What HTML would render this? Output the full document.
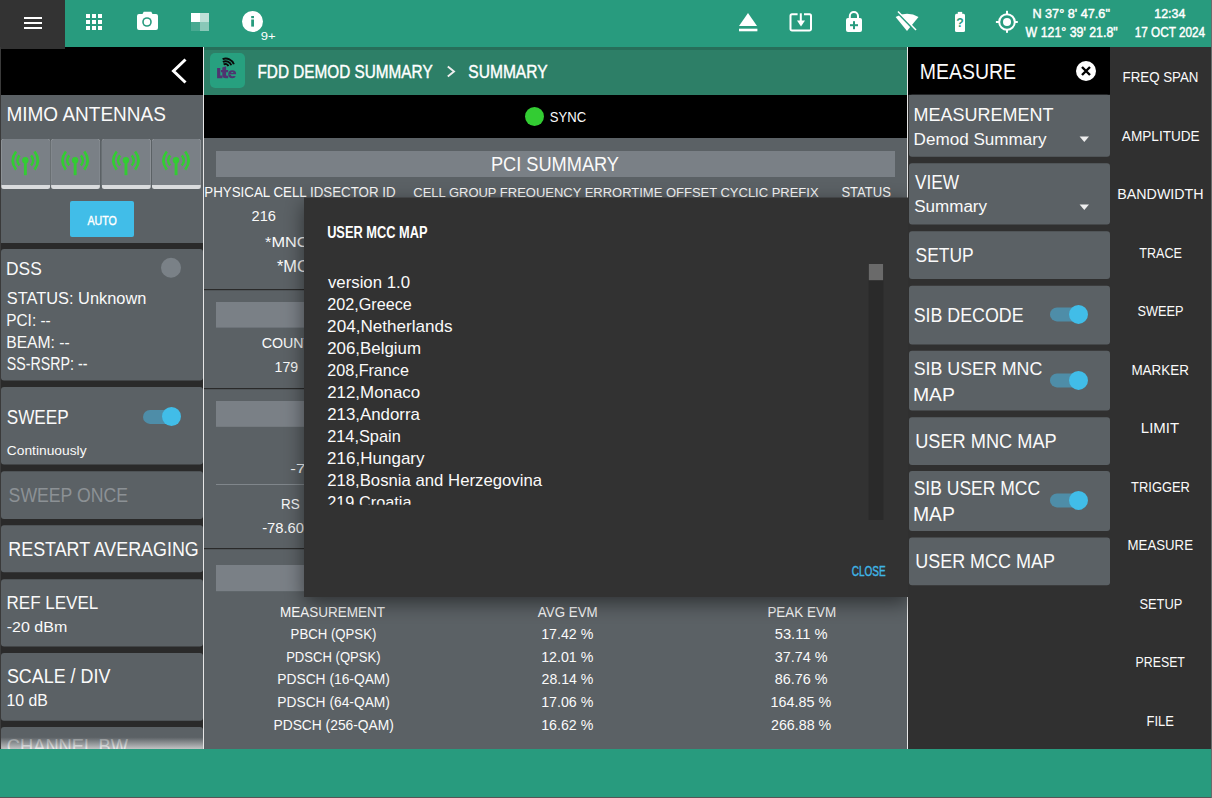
<!DOCTYPE html>
<html><head><meta charset="utf-8"><title>FDD Demod Summary</title>
<style>html,body{margin:0;padding:0;background:#2c2c2c;overflow:hidden}svg{display:block}text{font-family:"Liberation Sans",sans-serif}</style>
</head><body>
<svg width="1212" height="798" viewBox="0 0 1212 798">
<rect x="0" y="0" width="1212" height="798" fill="#2a2a2a" />
<rect x="0" y="0" width="1212" height="47" fill="#289b7e" />
<rect x="0" y="0" width="65" height="49" fill="#333333" />
<rect x="24" y="17" width="18" height="2" fill="#ffffff" />
<rect x="24" y="22" width="18" height="2" fill="#ffffff" />
<rect x="24" y="27" width="18" height="2" fill="#ffffff" />
<rect x="86" y="14" width="4" height="4" fill="#ffffff" />
<rect x="86" y="20" width="4" height="4" fill="#ffffff" />
<rect x="86" y="26" width="4" height="4" fill="#ffffff" />
<rect x="92" y="14" width="4" height="4" fill="#ffffff" />
<rect x="92" y="20" width="4" height="4" fill="#ffffff" />
<rect x="92" y="26" width="4" height="4" fill="#ffffff" />
<rect x="98" y="14" width="4" height="4" fill="#ffffff" />
<rect x="98" y="20" width="4" height="4" fill="#ffffff" />
<rect x="98" y="26" width="4" height="4" fill="#ffffff" />
<path d="M137 16 a2 2 0 0 1 2-2 h3.5 l1.2-2.2 h7.6 l1.2 2.2 h3.5 a2 2 0 0 1 2 2 v12 a2 2 0 0 1-2 2 h-17 a2 2 0 0 1-2-2z" fill="#fff"/>
<circle cx="147" cy="22" r="4.8" fill="#289b7e" />
<circle cx="147" cy="22" r="3.2" fill="#fff" />
<rect x="191" y="13" width="9" height="9" fill="#ffffff" />
<rect x="200" y="13" width="9" height="9" fill="#ffffff" fill-opacity="0.7"/>
<rect x="191" y="22" width="9" height="9" fill="#ffffff" fill-opacity="0.15"/>
<rect x="200" y="22" width="9" height="9" fill="#ffffff" fill-opacity="0.45"/>
<circle cx="252.5" cy="21.5" r="10.5" fill="#ffffff" />
<rect x="251.2" y="16" width="2.8" height="2.2" fill="#289b7e" />
<rect x="251.2" y="19.5" width="2.8" height="7.1" fill="#289b7e" />
<text x="260.79" y="39.50" font-size="11.63" textLength="14.85" lengthAdjust="spacingAndGlyphs" fill="#ffffff" >9+</text>
<path d="M748 13 L757 26 H739 Z" fill="#fff"/>
<rect x="739" y="28.7" width="18.4" height="2.6" fill="#fff" />
<path d="M797.6 14.3 H792 a1.5 1.5 0 0 0-1.5 1.5 V29.1 a1.5 1.5 0 0 0 1.5 1.5 H809.5 a1.5 1.5 0 0 0 1.5-1.5 V15.8 a1.5 1.5 0 0 0-1.5-1.5 H804" fill="none" stroke="#fff" stroke-width="2"/>
<rect x="799.8" y="13.3" width="2" height="9" fill="#fff" />
<path d="M797 20.6 H805 L801 26.4 Z" fill="#fff"/>
<path d="M849.8 18.5 V16 a4.1 4.1 0 0 1 8.2 0 V18.5" fill="none" stroke="#fff" stroke-width="2"/>
<rect x="846" y="17.9" width="16" height="14.2" fill="#fff" rx="2" />
<rect x="850" y="24.2" width="8" height="2" fill="#289b7e" />
<rect x="853" y="21.2" width="2" height="8" fill="#289b7e" />
<path d="M895.6 17 A 22 22 0 0 1 918.5 17 L907 31 Z" fill="#fff"/>
<path d="M897 12 L915.5 31" stroke="#289b7e" stroke-width="2.2"/>
<path d="M898 11.5 L916 30" stroke="#fff" stroke-width="1.5"/>
<rect x="957.8" y="11.9" width="4.4" height="2.5" fill="#fff" />
<rect x="955" y="13.7" width="10" height="18.2" fill="#fff" rx="1.5" />
<text x="956.24" y="27.00" font-size="12.35" textLength="7.47" lengthAdjust="spacingAndGlyphs" font-weight="bold" fill="#289b7e" >?</text>
<circle cx="1007" cy="22" r="7.8" fill="none" stroke="#fff" stroke-width="2"/>
<circle cx="1007" cy="22" r="4" fill="#fff" />
<rect x="1006" y="10.8" width="2" height="3.5" fill="#fff" />
<rect x="1006" y="29.5" width="2" height="3.3" fill="#fff" />
<rect x="995.9" y="21" width="3.5" height="2" fill="#fff" />
<rect x="1014.5" y="21" width="3.3" height="2" fill="#fff" />
<text x="1032.39" y="17.97" font-size="13.30" textLength="77.53" lengthAdjust="spacingAndGlyphs" fill="#ffffff"  stroke="#ffffff" stroke-width="0.45">N 37° 8&#x27; 47.6&quot;</text>
<text x="1025.57" y="36.52" font-size="13.81" textLength="92.13" lengthAdjust="spacingAndGlyphs" fill="#ffffff"  stroke="#ffffff" stroke-width="0.45">W 121° 39&#x27; 21.8&quot;</text>
<text x="1154.28" y="17.97" font-size="13.30" textLength="31.06" lengthAdjust="spacingAndGlyphs" fill="#ffffff"  stroke="#ffffff" stroke-width="0.45">12:34</text>
<text x="1134.73" y="36.52" font-size="13.81" textLength="70.39" lengthAdjust="spacingAndGlyphs" fill="#ffffff"  stroke="#ffffff" stroke-width="0.45">17 OCT 2024</text>
<rect x="0" y="47" width="203" height="48" fill="#000" />
<path d="M185.5 59.5 L173.5 71 L185.5 82.5" fill="none" stroke="#fff" stroke-width="3"/>
<rect x="0" y="47" width="65" height="2" fill="#333333" />
<rect x="1" y="95" width="202" height="148" fill="#5b6165" />
<text x="6.45" y="121.00" font-size="20.35" textLength="159.41" lengthAdjust="spacingAndGlyphs" fill="#fafafa" >MIMO ANTENNAS</text>
<rect x="1.3" y="139" width="48.8" height="50" fill="#dadcde" rx="2.5" />
<rect x="1.3" y="139" width="48.8" height="46" fill="#7a8086" rx="2.5" />
<rect x="1.3" y="183" width="48.8" height="2" fill="#7a8086" />
<g fill="none" stroke="#33cc33" stroke-width="2.6" stroke-linecap="butt"><path d="M19.5 155.3 Q15.3 160.4 19.5 165.5"/><path d="M31.1 155.3 Q35.3 160.4 31.1 165.5"/><path d="M16.1 151.5 Q9.3 160.5 16.1 169.6"/><path d="M34.5 151.5 Q41.3 160.5 34.5 169.6"/></g>
<circle cx="25.3" cy="160.2" r="3.2" fill="#33cc33" />
<rect x="23.900000000000002" y="160" width="2.9" height="15.2" fill="#33cc33" />
<rect x="51.1" y="139" width="48.8" height="50" fill="#dadcde" rx="2.5" />
<rect x="51.1" y="139" width="48.8" height="46" fill="#7a8086" rx="2.5" />
<rect x="51.1" y="183" width="48.8" height="2" fill="#7a8086" />
<g fill="none" stroke="#33cc33" stroke-width="2.6" stroke-linecap="butt"><path d="M69.3 155.3 Q65.1 160.4 69.3 165.5"/><path d="M80.89999999999999 155.3 Q85.1 160.4 80.89999999999999 165.5"/><path d="M65.89999999999999 151.5 Q59.099999999999994 160.5 65.89999999999999 169.6"/><path d="M84.3 151.5 Q91.1 160.5 84.3 169.6"/></g>
<circle cx="75.1" cy="160.2" r="3.2" fill="#33cc33" />
<rect x="73.69999999999999" y="160" width="2.9" height="15.2" fill="#33cc33" />
<rect x="101.9" y="139" width="48.8" height="50" fill="#dadcde" rx="2.5" />
<rect x="101.9" y="139" width="48.8" height="46" fill="#7a8086" rx="2.5" />
<rect x="101.9" y="183" width="48.8" height="2" fill="#7a8086" />
<g fill="none" stroke="#33cc33" stroke-width="2.6" stroke-linecap="butt"><path d="M120.10000000000001 155.3 Q115.9 160.4 120.10000000000001 165.5"/><path d="M131.70000000000002 155.3 Q135.9 160.4 131.70000000000002 165.5"/><path d="M116.7 151.5 Q109.9 160.5 116.7 169.6"/><path d="M135.1 151.5 Q141.9 160.5 135.1 169.6"/></g>
<circle cx="125.9" cy="160.2" r="3.2" fill="#33cc33" />
<rect x="124.5" y="160" width="2.9" height="15.2" fill="#33cc33" />
<rect x="152" y="139" width="48.8" height="50" fill="#dadcde" rx="2.5" />
<rect x="152" y="139" width="48.8" height="46" fill="#7a8086" rx="2.5" />
<rect x="152" y="183" width="48.8" height="2" fill="#7a8086" />
<g fill="none" stroke="#33cc33" stroke-width="2.6" stroke-linecap="butt"><path d="M170.2 155.3 Q166 160.4 170.2 165.5"/><path d="M181.8 155.3 Q186 160.4 181.8 165.5"/><path d="M166.8 151.5 Q160 160.5 166.8 169.6"/><path d="M185.2 151.5 Q192 160.5 185.2 169.6"/></g>
<circle cx="176" cy="160.2" r="3.2" fill="#33cc33" />
<rect x="174.6" y="160" width="2.9" height="15.2" fill="#33cc33" />
<rect x="70" y="201" width="64" height="36" fill="#41bde8" rx="2" />
<text x="87.40" y="224.58" font-size="13.59" textLength="29.38" lengthAdjust="spacingAndGlyphs" fill="#ffffff"  stroke="#ffffff" stroke-width="0.45">AUTO</text>
<rect x="1" y="249" width="202" height="131.6" fill="#5b6165" rx="3" />
<text x="6.07" y="274.80" font-size="19.19" textLength="35.72" lengthAdjust="spacingAndGlyphs" fill="#fafafa" >DSS</text>
<circle cx="171" cy="267.7" r="10" fill="#7a8187" />
<text x="6.77" y="303.90" font-size="16.42" textLength="139.58" lengthAdjust="spacingAndGlyphs" fill="#fafafa" >STATUS: Unknown</text>
<text x="6.24" y="325.90" font-size="16.42" textLength="44.45" lengthAdjust="spacingAndGlyphs" fill="#fafafa" >PCI: --</text>
<text x="6.22" y="347.50" font-size="16.86" textLength="63.48" lengthAdjust="spacingAndGlyphs" fill="#fafafa" >BEAM: --</text>
<text x="6.85" y="369.70" font-size="17.73" textLength="80.58" lengthAdjust="spacingAndGlyphs" fill="#fafafa" >SS-RSRP: --</text>
<rect x="1" y="387.1" width="202" height="77.5" fill="#5b6165" rx="3" />
<text x="6.72" y="424.20" font-size="19.77" textLength="61.88" lengthAdjust="spacingAndGlyphs" fill="#fafafa" >SWEEP</text>
<rect x="143" y="409.9" width="30" height="14" fill="#4e8da8" rx="7" />
<circle cx="171.5" cy="416.5" r="9.5" fill="#41bde8" />
<text x="6.80" y="455.20" font-size="13.66" textLength="79.73" lengthAdjust="spacingAndGlyphs" fill="#fafafa" >Continuously</text>
<rect x="1" y="471.2" width="202" height="47.9" fill="#5b6165" rx="3" />
<text x="8.60" y="502.20" font-size="19.77" textLength="119.46" lengthAdjust="spacingAndGlyphs" fill="#8c9195" >SWEEP ONCE</text>
<rect x="1" y="525.3" width="202" height="47" fill="#5b6165" rx="3" />
<text x="8.37" y="556.00" font-size="19.48" textLength="190.34" lengthAdjust="spacingAndGlyphs" fill="#fafafa" >RESTART AVERAGING</text>
<rect x="1" y="579.3" width="202" height="67.3" fill="#5b6165" rx="3" />
<text x="6.50" y="608.60" font-size="19.04" textLength="91.76" lengthAdjust="spacingAndGlyphs" fill="#fafafa" >REF LEVEL</text>
<text x="6.79" y="631.90" font-size="15.55" textLength="60.47" lengthAdjust="spacingAndGlyphs" fill="#fafafa" >-20 dBm</text>
<rect x="1" y="653" width="202" height="67.8" fill="#5b6165" rx="3" />
<text x="6.89" y="682.80" font-size="19.33" textLength="103.49" lengthAdjust="spacingAndGlyphs" fill="#fafafa" >SCALE / DIV</text>
<text x="6.50" y="706.00" font-size="15.70" textLength="41.34" lengthAdjust="spacingAndGlyphs" fill="#fafafa" >10 dB</text>
<defs><linearGradient id="fade" x1="0" y1="0" x2="0" y2="1"><stop offset="0" stop-color="#5b6165"/><stop offset="0.35" stop-color="#5b6165"/><stop offset="1" stop-color="#e8e8e8"/></linearGradient></defs>
<rect x="1" y="727.1" width="202" height="22" fill="#5b6165" rx="3" />
<text x="6.78" y="752.50" font-size="19.62" textLength="121.29" lengthAdjust="spacingAndGlyphs" fill="#fafafa" >CHANNEL BW</text>
<rect x="1" y="731" width="202" height="18" fill="url(#fade)" fill-opacity="0.72"/>
<rect x="0" y="47" width="1" height="702" fill="#3a3a3a" />
<rect x="203" y="47" width="1" height="702" fill="#e6e6e6" />
<rect x="204" y="47" width="703" height="48" fill="#2d7f67" />
<rect x="204" y="47" width="703" height="3" fill="#000" fill-opacity="0.12"/>
<rect x="210" y="53" width="35" height="35" fill="#27a07f" rx="5" />
<g fill="#4f3470"><path d="M217.1 68 H220.3 V75.6 H222.4 V78.2 H217.1 Z"/><path d="M222.3 67.6 L226.1 66.3 V70 H228.2 V72.2 H226.1 V75 Q226.1 75.8 227 75.8 H228.2 V78.2 H225.8 Q222.3 78.2 222.3 75.5 V72.2 H221 V70 H222.3 Z"/></g>
<path d="M228.6 74.3 H236.1 Q236.3 70.2 232.3 70.2 Q228.2 70.2 228.2 74.3 Q228.2 78.3 232.3 78.3 Q235 78.3 235.8 76.3 L233.5 75.9 Q233 76.3 232.3 76.3 Q231 76.3 231 74.9 Z M231 73 Q231.2 72 232.2 72 Q233.4 72 233.4 73 Z" fill="#4f3470" fill-rule="evenodd"/>
<g fill="none" stroke="#0a0a0a" stroke-width="1.9"><path d="M223.6 64.4 A3.4 3.4 0 0 1 228.4 66.2"/><path d="M222.9 61.9 A6 6 0 0 1 231.3 65.3"/><path d="M222.6 59.2 A8.6 8.6 0 0 1 233.9 64.3"/></g>
<text x="257.47" y="77.78" font-size="19.11" textLength="175.14" lengthAdjust="spacingAndGlyphs" fill="#ffffff"  stroke="#ffffff" stroke-width="0.45">FDD DEMOD SUMMARY</text>
<path d="M447.8 66.5 L454 71.5 L447.8 76.5" fill="none" stroke="#eee" stroke-width="1.9"/>
<text x="468.32" y="77.78" font-size="19.11" textLength="79.30" lengthAdjust="spacingAndGlyphs" fill="#ffffff"  stroke="#ffffff" stroke-width="0.45">SUMMARY</text>
<rect x="204" y="95" width="703" height="43" fill="#000" />
<circle cx="534.5" cy="116.5" r="9.5" fill="#33cc33" />
<text x="549.71" y="122.20" font-size="14.83" textLength="36.39" lengthAdjust="spacingAndGlyphs" fill="#fafafa" >SYNC</text>
<rect x="204" y="138" width="703" height="611" fill="#5b6165" />
<rect x="204" y="289" width="703" height="1.2" fill="#2a2a2a" />
<rect x="204" y="388" width="703" height="1.2" fill="#2a2a2a" />
<rect x="204" y="548" width="703" height="1.2" fill="#2a2a2a" />
<rect x="216" y="151" width="679" height="26" fill="#7a8086" />
<rect x="216" y="302" width="679" height="25.6" fill="#7a8086" />
<rect x="216" y="401" width="679" height="25.8" fill="#7a8086" />
<rect x="216" y="565" width="679" height="26.2" fill="#7a8086" />
<rect x="216" y="484" width="679" height="1" fill="#80868b" />
<text x="490.91" y="171.20" font-size="20.06" textLength="128.09" lengthAdjust="spacingAndGlyphs" fill="#fafafa" >PCI SUMMARY</text>
<text x="204.31" y="196.70" font-size="14.10" textLength="191.32" lengthAdjust="spacingAndGlyphs" fill="#fafafa" >PHYSICAL CELL IDSECTOR ID</text>
<text x="413.34" y="196.60" font-size="13.52" textLength="405.23" lengthAdjust="spacingAndGlyphs" fill="#fafafa" >CELL GROUP FREOUENCY ERRORTIME OFFSET CYCLIC PREFIX</text>
<text x="841.43" y="196.50" font-size="13.81" textLength="49.44" lengthAdjust="spacingAndGlyphs" fill="#fafafa" >STATUS</text>
<text x="251.57" y="220.70" font-size="14.24" textLength="24.38" lengthAdjust="spacingAndGlyphs" fill="#fafafa" >216</text>
<text x="265.14" y="247.40" font-size="15.12" textLength="43.48" lengthAdjust="spacingAndGlyphs" fill="#fafafa" >*MNC</text>
<text x="276.94" y="271.50" font-size="15.70" textLength="43.69" lengthAdjust="spacingAndGlyphs" fill="#fafafa" >*MCC</text>
<text x="261.78" y="348.20" font-size="13.95" textLength="50.55" lengthAdjust="spacingAndGlyphs" fill="#fafafa" >COUNT</text>
<text x="274.62" y="371.50" font-size="13.81" textLength="23.65" lengthAdjust="spacingAndGlyphs" fill="#fafafa" >179</text>
<text x="290.25" y="472.60" font-size="13.66" textLength="24.49" lengthAdjust="spacingAndGlyphs" fill="#fafafa" >-78</text>
<text x="281.09" y="508.50" font-size="14.97" textLength="18.72" lengthAdjust="spacingAndGlyphs" fill="#fafafa" >RS</text>
<text x="262.14" y="532.70" font-size="15.55" textLength="41.83" lengthAdjust="spacingAndGlyphs" fill="#fafafa" >-78.60</text>
<text x="279.89" y="616.70" font-size="14.10" textLength="105.12" lengthAdjust="spacingAndGlyphs" fill="#fafafa" >MEASUREMENT</text>
<text x="537.87" y="616.70" font-size="14.10" textLength="59.90" lengthAdjust="spacingAndGlyphs" fill="#fafafa" >AVG EVM</text>
<text x="767.40" y="616.70" font-size="14.10" textLength="68.70" lengthAdjust="spacingAndGlyphs" fill="#fafafa" >PEAK EVM</text>
<text x="290.62" y="638.70" font-size="14.10" textLength="85.70" lengthAdjust="spacingAndGlyphs" fill="#fafafa" >PBCH (QPSK)</text>
<text x="541.22" y="638.70" font-size="14.10" textLength="52.09" lengthAdjust="spacingAndGlyphs" fill="#fafafa" >17.42 %</text>
<text x="774.77" y="638.70" font-size="14.10" textLength="52.79" lengthAdjust="spacingAndGlyphs" fill="#fafafa" >53.11 %</text>
<text x="286.13" y="661.50" font-size="14.10" textLength="94.48" lengthAdjust="spacingAndGlyphs" fill="#fafafa" >PDSCH (QPSK)</text>
<text x="541.22" y="661.50" font-size="14.10" textLength="52.09" lengthAdjust="spacingAndGlyphs" fill="#fafafa" >12.01 %</text>
<text x="774.80" y="661.50" font-size="14.10" textLength="52.76" lengthAdjust="spacingAndGlyphs" fill="#fafafa" >37.74 %</text>
<text x="277.27" y="684.30" font-size="14.10" textLength="112.69" lengthAdjust="spacingAndGlyphs" fill="#fafafa" >PDSCH (16-QAM)</text>
<text x="541.59" y="684.30" font-size="14.10" textLength="51.71" lengthAdjust="spacingAndGlyphs" fill="#fafafa" >28.14 %</text>
<text x="774.72" y="684.30" font-size="14.10" textLength="52.84" lengthAdjust="spacingAndGlyphs" fill="#fafafa" >86.76 %</text>
<text x="277.27" y="707.10" font-size="14.10" textLength="112.69" lengthAdjust="spacingAndGlyphs" fill="#fafafa" >PDSCH (64-QAM)</text>
<text x="541.22" y="707.10" font-size="14.10" textLength="52.09" lengthAdjust="spacingAndGlyphs" fill="#fafafa" >17.06 %</text>
<text x="770.61" y="707.10" font-size="14.10" textLength="60.60" lengthAdjust="spacingAndGlyphs" fill="#fafafa" >164.85 %</text>
<text x="273.47" y="729.90" font-size="14.10" textLength="120.39" lengthAdjust="spacingAndGlyphs" fill="#fafafa" >PDSCH (256-QAM)</text>
<text x="541.22" y="729.90" font-size="14.10" textLength="52.09" lengthAdjust="spacingAndGlyphs" fill="#fafafa" >16.62 %</text>
<text x="770.98" y="729.90" font-size="14.10" textLength="60.22" lengthAdjust="spacingAndGlyphs" fill="#fafafa" >266.88 %</text>
<rect x="907" y="47" width="1" height="702" fill="#e6e6e6" />
<defs><filter id="sh" x="-10%" y="-10%" width="120%" height="130%"><feDropShadow dx="0" dy="6" stdDeviation="10" flood-color="#000" flood-opacity="0.5"/></filter></defs>
<rect x="304" y="197.5" width="605" height="399.5" fill="#303030" filter="url(#sh)"/>
<text x="327.13" y="237.60" font-size="16.13" textLength="100.31" lengthAdjust="spacingAndGlyphs" font-weight="bold" fill="#ffffff" >USER MCC MAP</text>
<defs><clipPath id="dc"><rect x="304" y="250" width="560" height="254.7"/></clipPath></defs><g clip-path="url(#dc)">
<text x="327.94" y="287.60" font-size="16.57" textLength="82.11" lengthAdjust="spacingAndGlyphs" fill="#fafafa" >version 1.0</text>
<text x="327.19" y="309.60" font-size="16.57" textLength="84.63" lengthAdjust="spacingAndGlyphs" fill="#fafafa" >202,Greece</text>
<text x="327.14" y="331.60" font-size="16.57" textLength="125.48" lengthAdjust="spacingAndGlyphs" fill="#fafafa" >204,Netherlands</text>
<text x="327.15" y="353.60" font-size="16.57" textLength="93.86" lengthAdjust="spacingAndGlyphs" fill="#fafafa" >206,Belgium</text>
<text x="327.19" y="375.60" font-size="16.57" textLength="81.73" lengthAdjust="spacingAndGlyphs" fill="#fafafa" >208,France</text>
<text x="327.15" y="397.60" font-size="16.57" textLength="93.06" lengthAdjust="spacingAndGlyphs" fill="#fafafa" >212,Monaco</text>
<text x="327.15" y="419.60" font-size="16.57" textLength="92.75" lengthAdjust="spacingAndGlyphs" fill="#fafafa" >213,Andorra</text>
<text x="327.18" y="441.60" font-size="16.57" textLength="73.58" lengthAdjust="spacingAndGlyphs" fill="#fafafa" >214,Spain</text>
<text x="327.14" y="463.60" font-size="16.57" textLength="97.39" lengthAdjust="spacingAndGlyphs" fill="#fafafa" >216,Hungary</text>
<text x="327.16" y="485.60" font-size="16.57" textLength="214.84" lengthAdjust="spacingAndGlyphs" fill="#fafafa" >218,Bosnia and Herzegovina</text>
<text x="327.18" y="507.60" font-size="16.57" textLength="84.42" lengthAdjust="spacingAndGlyphs" fill="#fafafa" >219,Croatia</text>
</g>
<rect x="868.5" y="264" width="15" height="256" fill="#2a2a2a" />
<rect x="868.8" y="264" width="14.3" height="16.2" fill="#6a6a6a" />
<text x="851.72" y="576.48" font-size="14.32" textLength="33.89" lengthAdjust="spacingAndGlyphs" fill="#3fb4e4"  stroke="#3fb4e4" stroke-width="0.45">CLOSE</text>
<rect x="908" y="47" width="202" height="702" fill="#303030" />
<rect x="908" y="47" width="202" height="48" fill="#000" />
<text x="919.70" y="79.10" font-size="22.67" textLength="96.34" lengthAdjust="spacingAndGlyphs" fill="#fafafa" >MEASURE</text>
<circle cx="1086" cy="71" r="10" fill="#fff" />
<path d="M1082 67 L1090 75 M1090 67 L1082 75" stroke="#000" stroke-width="2.4"/>
<rect x="909" y="94.8" width="201" height="62" fill="#5b6165" rx="3" />
<rect x="909" y="163.2" width="201" height="61.4" fill="#5b6165" rx="3" />
<rect x="909" y="231.3" width="201" height="47.6" fill="#5b6165" rx="3" />
<rect x="909" y="285.7" width="201" height="58.9" fill="#5b6165" rx="3" />
<rect x="909" y="350.8" width="201" height="59.7" fill="#5b6165" rx="3" />
<rect x="909" y="417.2" width="201" height="47.7" fill="#5b6165" rx="3" />
<rect x="909" y="471" width="201" height="60" fill="#5b6165" rx="3" />
<rect x="909" y="537.5" width="201" height="47.7" fill="#5b6165" rx="3" />
<rect x="909" y="94.8" width="201" height="4" fill="#5b6165" />
<text x="913.52" y="120.80" font-size="19.19" textLength="139.89" lengthAdjust="spacingAndGlyphs" fill="#fafafa" >MEASUREMENT</text>
<text x="913.60" y="144.70" font-size="15.84" textLength="132.94" lengthAdjust="spacingAndGlyphs" fill="#fafafa" >Demod Summary</text>
<path d="M1079.6 136.6 H1089 L1084.3 141.9 Z" fill="#eee"/>
<text x="914.92" y="188.70" font-size="19.48" textLength="44.13" lengthAdjust="spacingAndGlyphs" fill="#fafafa" >VIEW</text>
<text x="914.23" y="212.40" font-size="15.84" textLength="72.81" lengthAdjust="spacingAndGlyphs" fill="#fafafa" >Summary</text>
<path d="M1079.6 204.6 H1089 L1084.3 209.9 Z" fill="#eee"/>
<text x="915.51" y="262.10" font-size="20.06" textLength="58.11" lengthAdjust="spacingAndGlyphs" fill="#fafafa" >SETUP</text>
<text x="913.69" y="322.00" font-size="20.06" textLength="109.87" lengthAdjust="spacingAndGlyphs" fill="#fafafa" >SIB DECODE</text>
<text x="913.69" y="374.90" font-size="18.75" textLength="128.59" lengthAdjust="spacingAndGlyphs" fill="#fafafa" >SIB USER MNC</text>
<text x="912.91" y="400.50" font-size="19.04" textLength="42.01" lengthAdjust="spacingAndGlyphs" fill="#fafafa" >MAP</text>
<text x="915.20" y="448.30" font-size="20.35" textLength="141.46" lengthAdjust="spacingAndGlyphs" fill="#fafafa" >USER MNC MAP</text>
<text x="913.71" y="495.00" font-size="19.62" textLength="126.36" lengthAdjust="spacingAndGlyphs" fill="#fafafa" >SIB USER MCC</text>
<text x="912.91" y="520.60" font-size="19.48" textLength="42.01" lengthAdjust="spacingAndGlyphs" fill="#fafafa" >MAP</text>
<text x="915.21" y="567.60" font-size="20.20" textLength="139.73" lengthAdjust="spacingAndGlyphs" fill="#fafafa" >USER MCC MAP</text>
<rect x="1050" y="307.4" width="35" height="14" fill="#4e8da8" rx="7" />
<circle cx="1078.5" cy="314.4" r="9.5" fill="#41bde8" />
<rect x="1050" y="373.4" width="35" height="14" fill="#4e8da8" rx="7" />
<circle cx="1078.5" cy="380.4" r="9.5" fill="#41bde8" />
<rect x="1050" y="493.4" width="35" height="14" fill="#4e8da8" rx="7" />
<circle cx="1078.5" cy="500.4" r="9.5" fill="#41bde8" />
<rect x="1110" y="47" width="102" height="702" fill="#303030" />
<text x="1122.52" y="82.00" font-size="14.97" textLength="75.95" lengthAdjust="spacingAndGlyphs" fill="#fafafa" >FREQ SPAN</text>
<text x="1121.87" y="140.50" font-size="14.97" textLength="77.81" lengthAdjust="spacingAndGlyphs" fill="#fafafa" >AMPLITUDE</text>
<text x="1117.23" y="199.00" font-size="14.97" textLength="86.43" lengthAdjust="spacingAndGlyphs" fill="#fafafa" >BANDWIDTH</text>
<text x="1139.22" y="257.50" font-size="14.97" textLength="42.72" lengthAdjust="spacingAndGlyphs" fill="#fafafa" >TRACE</text>
<text x="1137.42" y="316.00" font-size="14.97" textLength="46.05" lengthAdjust="spacingAndGlyphs" fill="#fafafa" >SWEEP</text>
<text x="1131.40" y="374.50" font-size="14.97" textLength="57.63" lengthAdjust="spacingAndGlyphs" fill="#fafafa" >MARKER</text>
<text x="1140.87" y="433.00" font-size="14.97" textLength="38.27" lengthAdjust="spacingAndGlyphs" fill="#fafafa" >LIMIT</text>
<text x="1131.11" y="491.50" font-size="14.97" textLength="58.79" lengthAdjust="spacingAndGlyphs" fill="#fafafa" >TRIGGER</text>
<text x="1127.62" y="550.00" font-size="14.97" textLength="65.35" lengthAdjust="spacingAndGlyphs" fill="#fafafa" >MEASURE</text>
<text x="1139.41" y="608.50" font-size="14.97" textLength="42.96" lengthAdjust="spacingAndGlyphs" fill="#fafafa" >SETUP</text>
<text x="1135.59" y="667.00" font-size="14.97" textLength="49.29" lengthAdjust="spacingAndGlyphs" fill="#fafafa" >PRESET</text>
<text x="1146.54" y="725.50" font-size="14.97" textLength="27.32" lengthAdjust="spacingAndGlyphs" fill="#fafafa" >FILE</text>
<rect x="0" y="749" width="1212" height="48" fill="#289b7e" />
<rect x="0" y="797" width="1212" height="1" fill="#555555" />
<rect x="1211" y="0" width="1" height="798" fill="#6a6a6a" />
</svg>
</body></html>
